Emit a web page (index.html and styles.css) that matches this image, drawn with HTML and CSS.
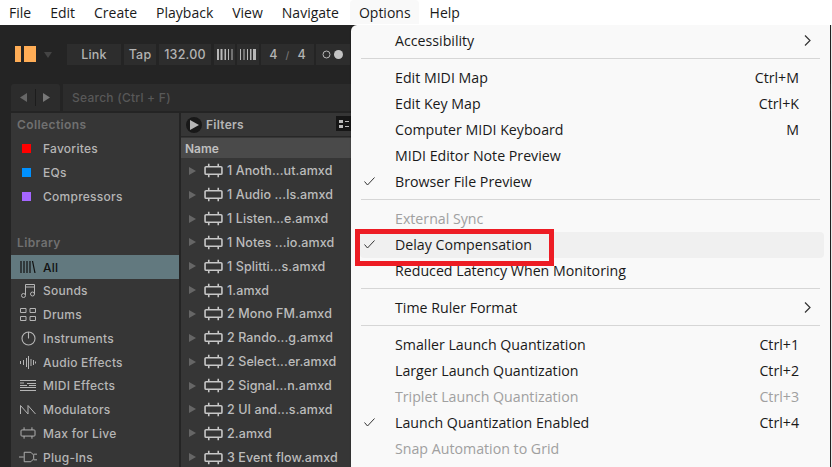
FILE: index.html
```html
<!DOCTYPE html>
<html lang="en">
<head>
<meta charset="utf-8">
<title>Live Options menu</title>
<link rel="stylesheet" href="styles.css">
</head>
<body>
<svg class="defs" width="0" height="0">
  <symbol id="i-max" viewBox="0 0 18 16"><path d="M2 4.500h14a1 1 0 0 1 1 1v5a1 1 0 0 1-1 1H2a1 1 0 0 1-1-1v-5a1 1 0 0 1 1-1zM4.500 1.500v3M13.500 1.500v3M4.500 11.500v3M13.500 11.500v3" fill="none" stroke="currentColor"/></symbol>
</svg>
<nav class="menubar">
  <span class="mb-item">File</span><span class="mb-item">Edit</span><span class="mb-item">Create</span><span class="mb-item">Playback</span><span class="mb-item">View</span><span class="mb-item">Navigate</span><span class="mb-item mb-open">Options</span><span class="mb-item">Help</span>
</nav>
<main class="app">
  <div class="transport">
    <svg class="logo" width="21" height="17" viewBox="0 0 21 17"><path d="M0 0h6v16H0zM9 0h12v16H9z" fill="#ffad56"/></svg>
    <span class="caret"></span>
    <span class="tbtn t-link">Link</span>
    <span class="tbtn t-tap">Tap</span>
    <span class="tbtn t-bpm">132.00</span>
    <span class="tbtn t-nudge"><svg width="16" height="11" viewBox="0 0 16 11"><path d="M0 0h2v11H0zM3.500 0h2v11h-2zM7.500 0h1.500v11H7.500zM11 0h1v11h-1zM14.500 0h1v11h-1z" fill="#b8b8b8"/></svg></span>
    <span class="tbtn t-nudge"><svg width="16" height="11" viewBox="0 0 16 11"><path d="M0 0h1v11H0zM3.500 0h1v11h-1zM7 0h1v11H7zM10 0h1.500v11H10zM13 0h3v11h-3z" fill="#b8b8b8"/></svg></span>
    <span class="tbtn t-sig">4 <i>/</i> 4</span>
    <span class="tbtn t-metro"><svg width="23" height="11" viewBox="0 0 23 11"><circle cx="4.500" cy="5.500" r="3.500" fill="none" stroke="#b8b8b8"/><circle cx="16.500" cy="5.500" r="4.500" fill="#c4c4c4"/></svg></span>
  </div>
  <div class="searchrow">
    <div class="navbtns">
      <svg width="8" height="9" viewBox="0 0 8 9"><path d="M7 0v9L0 4.500z" fill="#666"/></svg>
      <span class="navsep"></span>
      <svg width="8" height="9" viewBox="0 0 8 9"><path d="M0 0v9l7-4.500z" fill="#777"/></svg>
    </div>
    <div class="search">Search (Ctrl + F)</div>
  </div>
  <div class="browser">
    <aside class="sidebar">
      <div class="sb-head">Collections</div>
      <div class="sb-row"><span class="swatch sw-red"></span><span class="sb-text">Favorites</span></div>
      <div class="sb-row"><span class="swatch sw-blue"></span><span class="sb-text">EQs</span></div>
      <div class="sb-row"><span class="swatch sw-purple"></span><span class="sb-text">Compressors</span></div>
      <div class="sb-gap"></div>
      <div class="sb-head">Library</div>
      <div class="sb-row sb-active"><span class="sb-icon"><svg width="16" height="12" viewBox="0 0 16 12"><path d="M1 0v12M4 0v12M7 0v12M10 0v12M12.500 0l2.500 12" fill="none" stroke="currentColor" stroke-width="1.200"/></svg></span><span class="sb-text">All</span></div>
      <div class="sb-row"><span class="sb-icon"><svg width="16" height="15" viewBox="0 0 16 15"><path d="M5.500 12V1.500h9V11M5.500 4h9" fill="none" stroke="currentColor"/><circle cx="3.500" cy="12.500" r="2" fill="none" stroke="currentColor"/><circle cx="12.500" cy="11" r="2" fill="none" stroke="currentColor"/></svg></span><span class="sb-text">Sounds</span></div>
      <div class="sb-row"><span class="sb-icon"><svg width="16" height="13" viewBox="0 0 16 13"><path d="M.5.500h5.500v4H.5zM10 .5h5.500v4H10zM.5 8.500h5.500v4H.5zM10 8.500h5.500v4H10z" fill="none" stroke="currentColor"/></svg></span><span class="sb-text">Drums</span></div>
      <div class="sb-row"><span class="sb-icon"><svg width="15" height="15" viewBox="0 0 15 15"><circle cx="7.500" cy="7.500" r="6.500" fill="none" stroke="currentColor" stroke-width="1.100"/><path d="M7.500 1v6.500" stroke="currentColor" stroke-width="1.100"/></svg></span><span class="sb-text">Instruments</span></div>
      <div class="sb-row"><span class="sb-icon"><svg width="16" height="13" viewBox="0 0 16 13"><path d="M.5 5v3M3.500 4v5M6.500 2v9M8.500 0v13M11 3v7M13.500 4v5M15.500 5.500v2" stroke="currentColor"/></svg></span><span class="sb-text">Audio Effects</span></div>
      <div class="sb-row"><span class="sb-icon"><svg width="16" height="11" viewBox="0 0 16 11"><path d="M0 .5h16M7 3.500h9M0 5.500h7M0 7.500h16M9 5.500h7M0 10.500h16M0 3h4" stroke="currentColor"/></svg></span><span class="sb-text">MIDI Effects</span></div>
      <div class="sb-row"><span class="sb-icon"><svg width="16" height="9" viewBox="0 0 16 9"><path d="M.5 9V.5L8 9V.5L15.500 9" fill="none" stroke="currentColor"/></svg></span><span class="sb-text">Modulators</span></div>
      <div class="sb-row"><span class="sb-icon"><svg class="ic-max" width="16" height="14"><use href="#i-max"/></svg></span><span class="sb-text">Max for Live</span></div>
      <div class="sb-row"><span class="sb-icon"><svg width="19" height="12" viewBox="0 0 19 12"><path d="M0 6h5M5.500 1h7l3 3v4l-3 3h-7zM15.500 3H19M15.500 9H19" fill="none" stroke="currentColor"/></svg></span><span class="sb-text">Plug-Ins</span></div>
    </aside>
    <section class="list">
      <div class="filters">
        <span class="playcirc"><svg width="10" height="10" viewBox="0 0 10 10"><path d="M0 0v10l9-5z" fill="#b5b5b5"/></svg></span>
        <span class="f-label">Filters</span>
        <span class="f-view"><svg width="10" height="10" viewBox="0 0 10 10"><path d="M0 1h4v3H0zM0 6h4v3H0zM6 2h4v1H6zM6 7h4v1H6z" fill="#bbb"/></svg></span>
      </div>
      <div class="l-head">Name</div>
      <div class="l-row"><span class="tri"></span><svg class="l-icon"><use href="#i-max"/></svg><span>1 Anoth...ut.amxd</span></div>
      <div class="l-row"><span class="tri"></span><svg class="l-icon"><use href="#i-max"/></svg><span>1 Audio ...ls.amxd</span></div>
      <div class="l-row"><span class="tri"></span><svg class="l-icon"><use href="#i-max"/></svg><span>1 Listen...e.amxd</span></div>
      <div class="l-row"><span class="tri"></span><svg class="l-icon"><use href="#i-max"/></svg><span>1 Notes ...io.amxd</span></div>
      <div class="l-row"><span class="tri"></span><svg class="l-icon"><use href="#i-max"/></svg><span>1 Splitti...s.amxd</span></div>
      <div class="l-row"><span class="tri"></span><svg class="l-icon"><use href="#i-max"/></svg><span>1.amxd</span></div>
      <div class="l-row"><span class="tri"></span><svg class="l-icon"><use href="#i-max"/></svg><span>2 Mono FM.amxd</span></div>
      <div class="l-row"><span class="tri"></span><svg class="l-icon"><use href="#i-max"/></svg><span>2 Rando...g.amxd</span></div>
      <div class="l-row"><span class="tri"></span><svg class="l-icon"><use href="#i-max"/></svg><span>2 Select...er.amxd</span></div>
      <div class="l-row"><span class="tri"></span><svg class="l-icon"><use href="#i-max"/></svg><span>2 Signal...n.amxd</span></div>
      <div class="l-row"><span class="tri"></span><svg class="l-icon"><use href="#i-max"/></svg><span>2 UI and...s.amxd</span></div>
      <div class="l-row"><span class="tri"></span><svg class="l-icon"><use href="#i-max"/></svg><span>2.amxd</span></div>
      <div class="l-row"><span class="tri"></span><svg class="l-icon"><use href="#i-max"/></svg><span>3 Event flow.amxd</span></div>
    </section>
  </div>
  <div class="menu">
    <div class="m-row"><span class="m-label">Accessibility</span><svg class="m-arrow" width="7" height="11" viewBox="0 0 7 11"><path d="M1 .5l5 5-5 5" fill="none" stroke="#333" stroke-width="1.200"/></svg></div>
    <div class="m-sep"></div>
    <div class="m-row"><span class="m-label">Edit MIDI Map</span><span class="m-key">Ctrl+M</span></div>
    <div class="m-row"><span class="m-label">Edit Key Map</span><span class="m-key">Ctrl+K</span></div>
    <div class="m-row"><span class="m-label">Computer MIDI Keyboard</span><span class="m-key">M</span></div>
    <div class="m-row"><span class="m-label">MIDI Editor Note Preview</span></div>
    <div class="m-row"><svg class="m-check" width="11" height="9" viewBox="0 0 11 9"><path d="M.5 4.500l3 3.500L10.500.5" fill="none" stroke="#333"/></svg><span class="m-label">Browser File Preview</span></div>
    <div class="m-sep"></div>
    <div class="m-row m-dis"><span class="m-label">External Sync</span></div>
    <div class="m-row m-hi"><svg class="m-check" width="11" height="9" viewBox="0 0 11 9"><path d="M.5 4.500l3 3.500L10.500.5" fill="none" stroke="#333"/></svg><span class="m-label">Delay Compensation</span></div>
    <div class="m-row"><span class="m-label">Reduced Latency When Monitoring</span></div>
    <div class="m-sep"></div>
    <div class="m-row"><span class="m-label">Time Ruler Format</span><svg class="m-arrow" width="7" height="11" viewBox="0 0 7 11"><path d="M1 .5l5 5-5 5" fill="none" stroke="#333" stroke-width="1.200"/></svg></div>
    <div class="m-sep"></div>
    <div class="m-row"><span class="m-label">Smaller Launch Quantization</span><span class="m-key">Ctrl+1</span></div>
    <div class="m-row"><span class="m-label">Larger Launch Quantization</span><span class="m-key">Ctrl+2</span></div>
    <div class="m-row m-dis"><span class="m-label">Triplet Launch Quantization</span><span class="m-key">Ctrl+3</span></div>
    <div class="m-row"><svg class="m-check" width="11" height="9" viewBox="0 0 11 9"><path d="M.5 4.500l3 3.500L10.500.5" fill="none" stroke="#333"/></svg><span class="m-label">Launch Quantization Enabled</span><span class="m-key">Ctrl+4</span></div>
    <div class="m-row m-dis"><span class="m-label">Snap Automation to Grid</span></div>
  </div>
  <div class="callout"></div>
</main>
</body>
</html>
```
FILE: styles.css
```css
* { box-sizing: border-box; }
html, body { margin: 0; height: 100%; }
body { width: 832px; height: 467px; overflow: hidden; background: #fff; display: flex; flex-direction: column; font-family: "Open Sans", "Noto Sans", sans-serif; }
.defs { position: absolute; }

.menubar { height: 24px; flex: none; display: flex; background: #fff; padding-left: 0; font-size: 14px; color: #1a1a1a; align-items: stretch; }
.mb-item { display: flex; align-items: center; padding: 0 8px 0 9px; margin-right: 2px; }
.mb-open { background: #f9f9f9; border-radius: 4px 4px 0 0; margin-left: 1px; }

.app { position: relative; flex: 1; min-height: 0; background: #242424; overflow: hidden; margin-top: 1px; font-family: Inter, sans-serif; padding-left: 11px; display: flex; flex-direction: column; border-right: 1px solid #e8e8e8; }

.transport { height: 59px; flex: none; display: flex; align-items: flex-start; gap: 3px; padding: 19px 0 0 56px; position: relative; }
.logo { position: absolute; left: 4px; top: 21px; }
.caret { position: absolute; left: 33px; top: 27px; width: 0; height: 0; border: 4.500px solid transparent; border-top: 6px solid #444; border-bottom: 0; }
.tbtn { height: 21px; background: #2d2d2d; color: #b3b3b3; font-size: 12.500px; font-weight: 500; letter-spacing: .2px; display: flex; align-items: center; justify-content: center; flex: none; }
.t-link { width: 54px; }
.t-tap { width: 32px; }
.t-bpm { width: 52px; }
.t-nudge { width: 21px; }
.t-nudge + .t-nudge { margin-left: -1px; width: 22px; }
.t-sig { width: 53px; gap: 8px; margin-left: -1px; }
.t-sig i { font-style: normal; color: #777; font-size: 10px; }
.t-metro { width: 34px; margin-left: -1px; }

.searchrow { height: 27px; flex: none; display: flex; gap: 3px; }
.navbtns { width: 49px; background: #2c2c2c; display: flex; align-items: center; justify-content: center; gap: 7px; border-radius: 3px 3px 0 0; }
.navsep { width: 1px; height: 17px; background: #1c1c1c; }
.search { flex: 1; background: #2c2c2c; color: #585858; font-size: 12px; font-weight: 500; letter-spacing: .25px; display: flex; align-items: center; padding-left: 9px; }

.browser { flex: 1; min-height: 0; display: flex; gap: 2px; margin-top: 2px; }
.sidebar { width: 168px; flex: none; background: #363636; color: #b5b5b5; font-size: 12px; font-weight: 500; letter-spacing: .25px; }
.sb-head { height: 24px; display: flex; align-items: center; padding: 0 0 1px 6px; color: #707070; font-weight: 600; letter-spacing: .4px; }
.sb-row { height: 23.750px; display: flex; align-items: center; position: relative; padding-left: 32px; }
.sb-gap { height: 23px; }
.sb-text { white-space: nowrap; }
.sb-active { background: #62797f; color: #111; }
.swatch { position: absolute; left: 11px; top: 7px; width: 9px; height: 9px; }
.sw-red { background: #f00; }
.sw-blue { background: #0091ff; }
.sw-purple { background: #a566ff; }
.sb-icon { position: absolute; left: 8px; top: 0; bottom: 0; width: 18px; display: flex; align-items: center; justify-content: center; }
.ic-max { stroke-width: 1.100; }

.list { width: 170px; flex: none; background: #363636; color: #b5b5b5; font-size: 12px; font-weight: 500; }
.filters { height: 24px; display: flex; align-items: center; padding-left: 5px; position: relative; border-bottom: 1px solid #272727; letter-spacing: .25px; }
.playcirc { width: 16px; height: 16px; border-radius: 50%; background: #181818; display: flex; align-items: center; justify-content: center; padding-left: 2px; }
.f-label { margin-left: 4px; font-weight: 600; }
.f-view { position: absolute; right: 0; top: 3px; width: 15px; height: 15px; background: #161616; display: flex; align-items: center; justify-content: center; }
.l-head { height: 20px; background: #4a4a4a; display: flex; align-items: center; padding-left: 4px; font-weight: 600; color: #c0c0c0; margin: 1px 0; }
.l-row { height: 23.850px; display: flex; align-items: center; padding-left: 8px; white-space: nowrap; color: #bcbcbc; font-size: 12.500px; letter-spacing: .1px; }
.tri { width: 0; height: 0; border-left: 7px solid #666; border-top: 4.500px solid transparent; border-bottom: 4.500px solid transparent; flex: none; }
.l-icon { width: 19px; height: 17px; margin-left: 8px; margin-right: 4px; flex: none; color: #c8c8c8; stroke-width: 1.500; }

.menu { position: absolute; left: 351px; top: 0; width: 479px; height: 450px; background: #f9f9f9; border-radius: 6px 0 0 0; box-shadow: 0 0 2px rgba(0,0,0,.25); padding-top: 3px; font-family: "Open Sans", "Noto Sans", sans-serif; font-size: 14.200px; color: #1a1a1a; }
.m-row { height: 26px; display: flex; align-items: center; justify-content: space-between; position: relative; padding: 0 25px 2px 44px; margin: 0 6px 0 0; }
.m-hi { background: #f0f0f0; margin-left: 9px; padding-left: 35px; border-radius: 4px; }
.m-dis { color: #a0a0a0; }
.m-check { position: absolute; left: 13px; top: 8px; }
.m-hi .m-check { left: 4px; }
.m-arrow { margin-right: -12px; }
.m-sep { height: 1px; background: #d6d6d6; margin: 4px 10px 6px 10px; }
.callout { position: absolute; left: 355px; top: 204px; width: 199px; height: 37px; border: 5px solid #ed1c24; }
```
